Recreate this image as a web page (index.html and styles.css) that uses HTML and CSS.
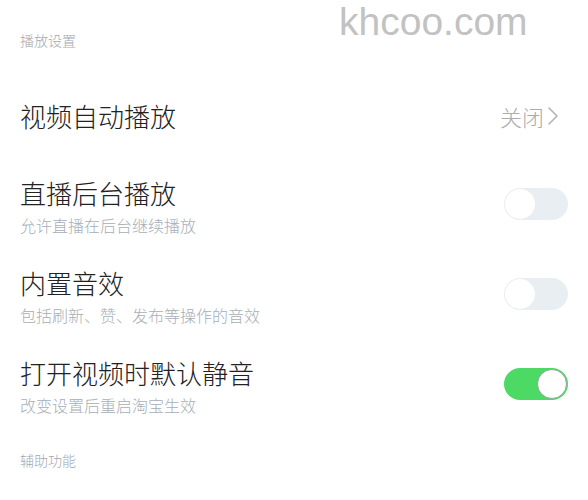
FILE: index.html
```html
<!DOCTYPE html>
<html lang="zh-CN">
<head>
<meta charset="utf-8">
<title>播放设置</title>
<link rel="stylesheet" href="styles.css">
</head>
<body>
<div class="page">
  <div class="watermark">khcoo.com</div>
  <div class="section-header first">播放设置</div>

  <div class="row row-link">
    <div class="title">视频自动播放</div>
    <div class="value">
      <span>关闭</span>
      <svg class="chev" width="12" height="20" viewBox="0 0 12 20"><polyline points="2,2 10,10 2,18" fill="none" stroke="#b3b3b3" stroke-width="1.6" stroke-linecap="round" stroke-linejoin="round"/></svg>
    </div>
  </div>

  <div class="row">
    <div class="texts">
      <div class="title">直播后台播放</div>
      <div class="sub">允许直播在后台继续播放</div>
    </div>
    <div class="toggle"><div class="knob"></div></div>
  </div>

  <div class="row">
    <div class="texts">
      <div class="title">内置音效</div>
      <div class="sub">包括刷新、赞、发布等操作的音效</div>
    </div>
    <div class="toggle"><div class="knob"></div></div>
  </div>

  <div class="row">
    <div class="texts">
      <div class="title">打开视频时默认静音</div>
      <div class="sub">改变设置后重启淘宝生效</div>
    </div>
    <div class="toggle on"><div class="knob"></div></div>
  </div>

  <div class="section-header second">辅助功能</div>
</div>
</body>
</html>
```

FILE: styles.css
```css
html, body {
  margin: 0;
  padding: 0;
  background: #ffffff;
}
body {
  font-family: "Noto Sans CJK SC", "Noto Sans", sans-serif;
  width: 588px;
  height: 500px;
  overflow: hidden;
}
.page {
  position: relative;
  padding: 0 20px 0 20px;
}
.watermark {
  position: absolute;
  left: 339px;
  top: -3px;
  font-family: "Liberation Sans", Arial, sans-serif;
  font-size: 39px;
  line-height: 50px;
  color: #c2c2c2;
}
.section-header {
  font-size: 14px;
  line-height: 20px;
  color: #9ea8b2;
  font-weight: 300;
}
.section-header.first {
  padding-top: 30px;
  padding-bottom: 20px;
}
.section-header.second {
  padding-top: 16px;
}
.row {
  height: 90px;
  display: flex;
  align-items: center;
  justify-content: space-between;
}
.row-link {
  height: 94px;
  padding-bottom: 3px;
  box-sizing: border-box;
}
.texts {
  margin-bottom: 3px;
}
.title {
  font-size: 26px;
  line-height: 34px;
  color: #222222;
  font-weight: 300;
}
.sub {
  font-size: 16px;
  line-height: 30px;
  color: #a7aeb6;
  font-weight: 300;
}
.value {
  display: flex;
  align-items: center;
  gap: 3px;
  margin-right: 9px;
  font-size: 22px;
  line-height: 30px;
  color: #acacac;
  font-weight: 300;
}
.chev {
  display: block;
}
.toggle {
  width: 64px;
  height: 32px;
  border-radius: 16px;
  background: #e9eef3;
  box-sizing: border-box;
  padding: 1px;
  display: flex;
  margin-bottom: 10px;
}
.toggle .knob {
  width: 30px;
  height: 30px;
  border-radius: 50%;
  background: #ffffff;
  box-shadow: 0 0 1px rgba(0, 0, 0, 0.03);
}
.toggle.on {
  background: #4cd964;
  justify-content: flex-end;
}
.toggle.on .knob {
  box-sizing: border-box;
  border: 1.5px solid #8fa79a;
}
```
